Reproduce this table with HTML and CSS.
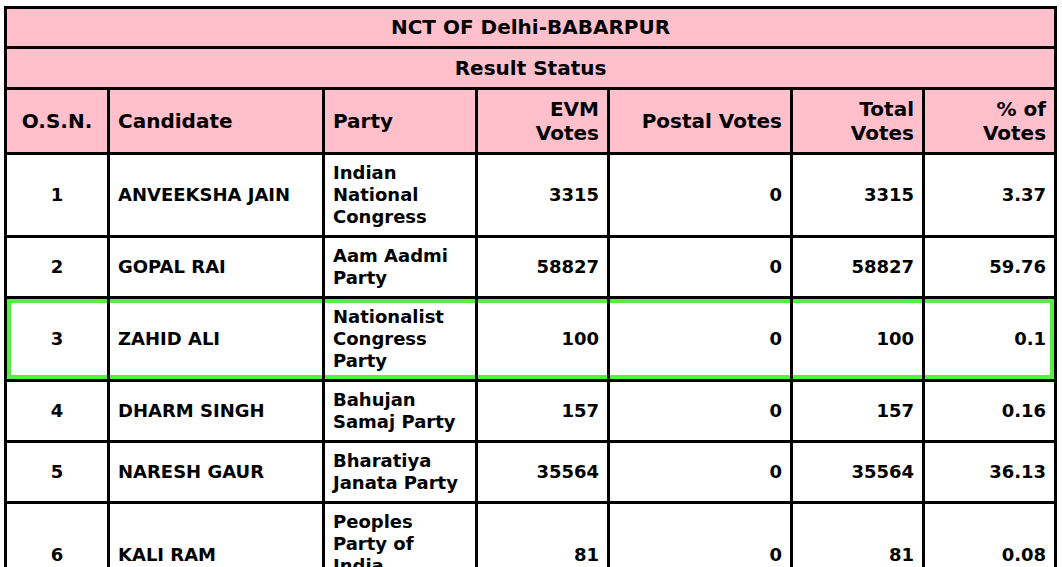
FILE: index.html
```html
<!DOCTYPE html>
<html>
<head>
<meta charset="utf-8">
<link rel="stylesheet" href="styles.css">
</head>
<body>
<table class="results">
  <colgroup>
    <col class="c-osn"><col class="c-cand"><col class="c-party"><col class="c-evm"><col class="c-postal"><col class="c-total"><col class="c-pct">
  </colgroup>
  <thead>
    <tr><th colspan="7" class="title title-main">NCT OF Delhi-BABARPUR</th></tr>
    <tr><th colspan="7" class="title title-sub">Result Status</th></tr>
    <tr class="heads">
      <th class="center">O.S.N.</th>
      <th class="left">Candidate</th>
      <th class="left">Party</th>
      <th class="right">EVM Votes</th>
      <th class="right">Postal Votes</th>
      <th class="right">Total Votes</th>
      <th class="right">% of Votes</th>
    </tr>
  </thead>
  <tbody>
    <tr>
      <td class="center">1</td><td>ANVEEKSHA JAIN</td><td>Indian National Congress</td>
      <td class="right">3315</td><td class="right">0</td><td class="right">3315</td><td class="right">3.37</td>
    </tr>
    <tr>
      <td class="center">2</td><td>GOPAL RAI</td><td>Aam Aadmi Party</td>
      <td class="right">58827</td><td class="right">0</td><td class="right">58827</td><td class="right">59.76</td>
    </tr>
    <tr class="hl">
      <td class="center">3</td><td>ZAHID ALI</td><td>Nationalist Congress Party</td>
      <td class="right">100</td><td class="right">0</td><td class="right">100</td><td class="right">0.1</td>
    </tr>
    <tr>
      <td class="center">4</td><td>DHARM SINGH</td><td>Bahujan Samaj Party</td>
      <td class="right">157</td><td class="right">0</td><td class="right">157</td><td class="right">0.16</td>
    </tr>
    <tr>
      <td class="center">5</td><td>NARESH GAUR</td><td>Bharatiya Janata Party</td>
      <td class="right">35564</td><td class="right">0</td><td class="right">35564</td><td class="right">36.13</td>
    </tr>
    <tr>
      <td class="center">6</td><td>KALI RAM</td><td>Peoples Party of India (Democratic)</td>
      <td class="right">81</td><td class="right">0</td><td class="right">81</td><td class="right">0.08</td>
    </tr>
  </tbody>
</table>
</body>
</html>
```
FILE: styles.css
```css
html, body {
  background: #ffffff;
}
body {
  margin: 6px 4px 4px 4px;
  font-family: "DejaVu Sans", Verdana, sans-serif;
  font-weight: bold;
  color: #000000;
}
.results {
  border-collapse: collapse;
  table-layout: fixed;
  width: 1053px;
  border: 3px solid #000;
}
.c-osn { width: 103px; }
.c-cand { width: 215px; }
.c-party { width: 153px; }
.c-evm { width: 132px; }
.c-postal { width: 183px; }
.c-total { width: 132px; }
.c-pct { width: 132px; }

.results th,
.results td {
  border: 3px solid #000;
  padding: 7px 8px;
  vertical-align: middle;
}
.results th {
  background: #ffc0cb;
  font-size: 20px;
  line-height: 24px;
  font-weight: bold;
}
.results th.title {
  text-align: center;
}
.results th.title-main {
  padding: 6px 8px 7px;
}
.results th.title-sub {
  padding: 7px 8px 7px;
}
.results td {
  font-size: 18px;
  line-height: 22px;
  text-align: left;
  background: #ffffff;
}
.results .center { text-align: center; }
.results .left { text-align: left; }
.results .right { text-align: right; }

.hl td {
  box-shadow: inset 0 4px 0 #55ee44, inset 0 -4px 0 #55ee44;
}
.hl td:first-child {
  box-shadow: inset 0 4px 0 #55ee44, inset 0 -4px 0 #55ee44, inset 4px 0 0 #55ee44;
}
.hl td:last-child {
  box-shadow: inset 0 4px 0 #55ee44, inset 0 -4px 0 #55ee44, inset -4px 0 0 #55ee44;
}
```
